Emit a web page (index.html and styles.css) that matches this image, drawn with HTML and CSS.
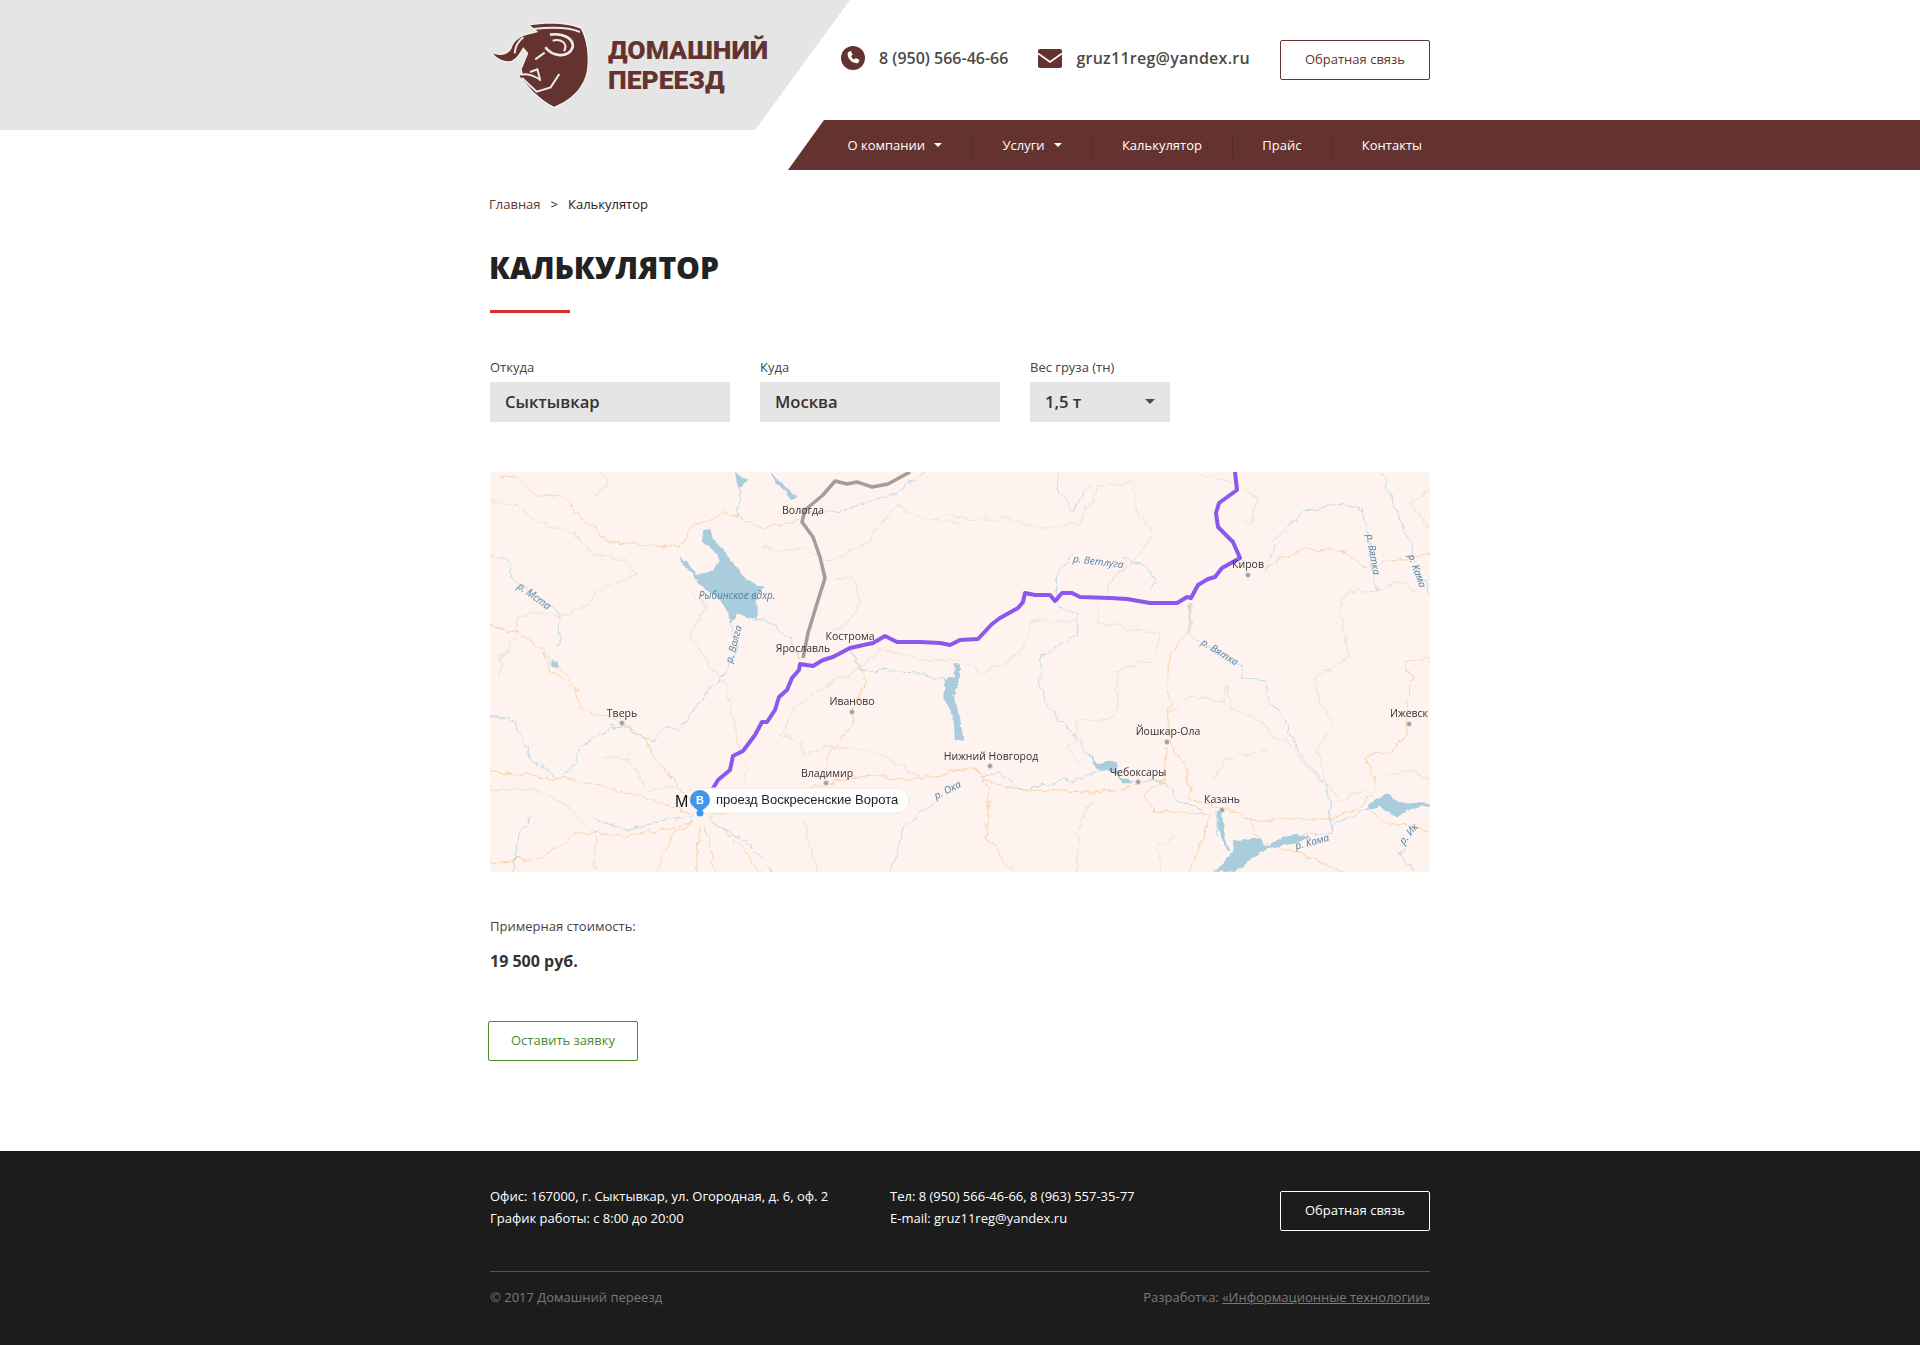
FILE: index.html
```html
<!DOCTYPE html>
<html lang="ru">
<head>
    <meta charset="UTF-8">
    <title>Калькулятор</title>
    <link rel="stylesheet" href="styles.css">
</head>
<body>
    <header class="header">
        <div class="header-top">
            <a class="logo" href="#">
                <svg class="logo-img" viewBox="0 0 360 330">
                    <path class="bull-halo" d="M150 46C205 36 275 42 302 56C318 85 326 125 322 170C318 220 285 265 222 292C200 280 180 262 160 245L118 198L128 190L125 178L145 130L130 112C120 125 115 142 95 152C80 158 55 150 38 130C60 140 85 135 95 115C100 95 120 80 140 75L175 66Z"/>
                    <path class="bull" d="M150 46C205 36 275 42 302 56C318 85 326 125 322 170C318 220 285 265 222 290C200 280 180 262 160 245L118 198L128 190L125 178L145 130L130 112C120 125 115 142 95 152C80 158 55 150 38 130C60 140 85 135 95 115C100 95 120 80 140 75L175 66Z"/>
                    <path class="bull-line" d="M160 57C215 51 270 53 300 66"/>
                    <path class="bull-line bull-curl" d="M196 112C215 138 264 148 278 112C282 86 250 68 210 74"/>
                    <path class="bull-line" d="M218 92C242 86 266 98 252 124"/>
                    <path class="bull-line" d="M130 82C112 96 105 112 104 130"/>
                    <path class="bull-line" d="M166 148L194 128"/>
                    <path class="bull-line" d="M122 194C145 190 170 200 182 212M126 204L170 245L212 232L238 192"/>
                    <path class="bull-line" d="M150 186L172 178L180 208"/>
                </svg>
                <span class="logo-name">ДОМАШНИЙ<br>ПЕРЕЕЗД</span>
            </a>
            <div class="contact contact-phone">
                <svg class="icon-phone" viewBox="0 0 24 24">
                    <circle class="icon-fill" cx="12" cy="12" r="12"/>
                    <path class="icon-white" d="M8.2 5.6l1.8-.5 1.7 3.7-1.6 1.2c.7 1.7 1.7 2.8 3.3 3.6l1.3-1.5 3.6 1.6-.5 2c-.3 1-1.2 1.6-2.2 1.5C10.500 16.700 7 13.100 6.600 8.300c0-1.200.5-2.300 1.600-2.700z"/>
                </svg>
                <span>8 (950) 566-46-66</span>
            </div>
            <div class="contact contact-mail">
                <svg class="icon-mail" viewBox="0 0 24 19">
                    <rect class="icon-fill" width="24" height="19" rx="2"/>
                    <path class="icon-stroke" d="M0 4.500L12 13L24 4.500"/>
                </svg>
                <span>gruz11reg@yandex.ru</span>
            </div>
            <a class="btn btn-brown" href="#">Обратная связь</a>
        </div>
        <nav class="menu">
            <a class="menu-item" href="#">О компании<i class="arrow"></i></a>
            <a class="menu-item" href="#">Услуги<i class="arrow"></i></a>
            <a class="menu-item" href="#">Калькулятор</a>
            <a class="menu-item" href="#">Прайс</a>
            <a class="menu-item menu-last" href="#">Контакты</a>
        </nav>
    </header>

    <main class="content">
        <div class="crumbs"><a href="#">Главная</a><span class="crumbs-sep">&gt;</span><span>Калькулятор</span></div>
        <h1 class="title">КАЛЬКУЛЯТОР</h1>
        <div class="title-line"></div>

        <div class="fields">
            <div class="field">
                <div class="field-label">Откуда</div>
                <div class="field-box">Сыктывкар</div>
            </div>
            <div class="field">
                <div class="field-label">Куда</div>
                <div class="field-box">Москва</div>
            </div>
            <div class="field field-small">
                <div class="field-label">Вес груза (тн)</div>
                <div class="field-box field-select">1,5 т<i class="arrow arrow-dark"></i></div>
            </div>
        </div>

        <svg class="map" viewBox="0 0 940 400">
            <defs>
                <filter id="wiggle" filterUnits="userSpaceOnUse" x="0" y="0" width="940" height="400">
                    <feTurbulence type="fractalNoise" baseFrequency="0.09" numOctaves="3" seed="4"/>
                    <feDisplacementMap in="SourceGraphic" scale="9" xChannelSelector="R" yChannelSelector="G"/>
                </filter>
                <filter id="wiggle-water" filterUnits="userSpaceOnUse" x="0" y="0" width="940" height="400">
                    <feTurbulence type="fractalNoise" baseFrequency="0.14" numOctaves="2" seed="9"/>
                    <feDisplacementMap in="SourceGraphic" scale="5" xChannelSelector="R" yChannelSelector="G"/>
                </filter>
            </defs>
            <rect class="map-bg" width="940" height="400"/>

            <g class="map-lines">
                <g transform="translate(-10,-2) scale(.3333)">
                    <path class="border" d="M30 95L110 105L160 155L280 190L350 260L440 270L470 320L350 360L320 410L240 440L160 420L110 450L100 520L60 570L60 615M360 10L385 40L350 75M640 370L680 410L625 490L690 590L740 650L750 700L770 810L800 900L790 960M900 790L970 690L1050 640L1130 600L1200 535L1330 570L1440 570M1060 330L1120 320L1140 400L1100 460L1060 480M840 225L900 250L950 230L1050 270L1160 220L1250 100L1330 150L1440 160M360 860L450 870L500 960L590 950M30 960L150 955L250 995L350 1100L340 1205M970 850L1050 830L1190 845L1250 880L1330 930M900 790L960 820L970 850M970 1040L1010 1205"/>
                    <path class="road" d="M30 463L115 490L195 545L280 640L305 715L425 758L495 805L520 860L590 940L640 1010M60 20L110 25L170 75L255 80L310 145L380 218L600 230L640 165L710 145L735 125L850 175L960 150M195 545L205 595L290 665M30 905L250 925L420 960L530 995L640 1030M30 1180L170 1165L300 1090L440 1100L640 1060M640 1060L580 1090L530 1205M660 1070L650 1205M675 1070L705 1205M690 1040L800 1150L835 1205M690 1040L1040 940L1180 915L1330 930L1440 900M1040 900L1050 850L1115 770L1115 725L1160 630L1110 540M960 570L950 545"/>
                    <path class="river" d="M30 250L75 265L100 330L240 430L235 530M30 740L90 745L140 840L150 870L240 925L290 880L300 830L390 770L430 770L515 815L560 770L590 790L660 690L700 650L750 600L770 540L750 465M770 10L780 70L775 145M800 440L870 460L930 500L950 550M1105 540L1140 600L1300 605L1400 630M345 1050L440 1080L560 1050L640 1040M100 1205L110 1100L155 1040M1230 1205L1280 1060L1360 1000M690 1050L800 1120L880 1205M960 120L1060 130L1240 70L1340 5"/>
                </g>
                <g transform="translate(460,-2) scale(.3333)">
                    <path class="border" d="M0 135L70 150L170 145L265 175L390 160L450 45L550 40L560 130L610 190L570 250L480 340L470 370M440 390L450 460L630 490L610 570L500 600L510 710L490 740L380 760L380 810L350 830L390 890M385 455L240 450L225 530L150 590L90 610L50 580M740 10L850 40L920 80L910 155L880 155M1440 175L1380 100L1440 60M1280 360L1190 370L1170 430L1200 560L1100 620L1110 700L1150 760L1100 850L1130 930L1140 990M650 730L720 680L820 690L830 650L840 710L910 740L950 770L970 810L1010 810L1060 880L1120 940M1280 360L1330 340L1340 330L1400 370M790 930L820 870L950 840M1245 960L1170 990L1140 950M640 1205L620 1130L680 1100M380 1205L390 1050L430 990M1300 920L1380 900L1440 930"/>
                    <path class="road" d="M0 900L80 895L100 930L210 960L400 965L420 970L520 960L580 935L650 930M720 400L715 480L660 550L650 640L660 700L650 750L670 830L710 900L720 990L850 1020L900 1050L1130 1050L1230 1015L1280 950L1245 860L1330 850L1370 790L1370 680L1385 620L1365 575L1440 565M650 830L640 930L580 970L610 1020L780 1030L760 1100L720 1205M940 290L1060 235L1190 245L1240 290L1440 250M1250 1020L1300 1050L1440 1085M900 1050L930 1115L1040 1145L1180 1205M105 1100L120 1020L110 940M105 1100L190 1205"/>
                    <path class="river" d="M320 10L330 70L370 120L420 45M365 260L320 320L320 400L380 430L385 495L280 550L265 640L300 720L370 790L440 880M520 260L600 300L620 335L595 365M720 400L720 490L870 590L880 620L945 630L950 680L1010 760L1040 840L1130 950L1145 1050L1145 1090L1040 1100M970 210L1060 125L1180 100L1240 120L1280 360M1300 10L1330 100L1390 240L1385 260L1440 370M940 310L980 220M90 925L140 900L210 960L300 940L400 925L490 880M600 930L650 940L680 990L760 1020M800 1020L810 1100M1140 1070L1250 1020M1380 1100L1350 1150L1390 1205"/>
                </g>
            </g>

            <g class="map-water">
                <path class="water" transform="translate(-10,-2) scale(.3333)" d="M670 180L690 178L700 210L730 240L770 290L800 330L848 350L830 390L830 450L800 440L770 430L750 465L745 430L720 390L680 360L655 340L640 310L615 295L595 258L620 275L650 315L670 310L700 300L720 270L700 240L665 215ZM870 5L950 80L935 90L890 40ZM765 10L805 30L775 60ZM1420 580L1425 620L1395 630L1390 680L1420 740L1425 810L1450 810L1440 740L1420 680L1440 625L1440 580ZM215 570L238 575L230 595L215 590Z"/>
                <path class="water" transform="translate(460,-2) scale(.3333)" d="M790 1205L850 1150L850 1110L930 1105L945 1130L1000 1100L1040 1095L1080 1100L1040 1120L950 1135L900 1170L860 1205ZM1255 1000L1310 970L1350 1000L1440 1000L1440 1005L1370 1020L1340 1045L1290 1010L1255 1020ZM420 855L440 880L490 870L500 880L510 920L560 940L520 940L490 905L440 900ZM800 1020L815 1020L825 1110L845 1150L825 1130L805 1080Z"/>
            </g>

            <polyline class="route route-alt" points="313,186 318,161 325,138 335,106 330,85 323,65 312,50 315,38 333,23 345,9 357,12 367,10 382,15 398,12 420,0"/>
            <polyline class="route" points="222,318 228,308 240,298 243,284 253,279 265,263 272,250 277,250 285,238 289,225 297,218 302,206 309,198 310,192 323,194 333,188 343,185 360,176 383,171 395,164 407,170 430,170 450,171 460,173 470,168 488,167 502,152 510,146 528,136 533,130 535,121 545,123 560,123 565,129 572,121 582,121 590,125 620,126 637,127 660,131 687,131 697,125 701,126 708,113 718,107 725,105 732,96 750,86 743,70 728,55 726,41 729,31 747,18 745,0"/>

            <circle class="city-dot" cx="132" cy="251" r="2.500"/>
            <circle class="city-dot" cx="362" cy="240" r="2.500"/>
            <circle class="city-dot" cx="336" cy="311" r="2.500"/>
            <circle class="city-dot" cx="500" cy="294" r="2.500"/>
            <circle class="city-dot" cx="758" cy="103" r="2.500"/>
            <circle class="city-dot" cx="919" cy="252" r="2.500"/>
            <circle class="city-dot" cx="677" cy="270" r="2.500"/>
            <circle class="city-dot" cx="648" cy="310" r="2.500"/>
            <circle class="city-dot" cx="732" cy="338" r="2.500"/>

            <text class="city" x="313" y="42">Вологда</text>
            <text class="city" x="360" y="168">Кострома</text>
            <text class="city" x="313" y="180">Ярославль</text>
            <text class="city" x="132" y="245">Тверь</text>
            <text class="city" x="362" y="233">Иваново</text>
            <text class="city" x="337" y="305">Владимир</text>
            <text class="city" x="501" y="288">Нижний Новгород</text>
            <text class="city" x="758" y="96">Киров</text>
            <text class="city" x="919" y="245">Ижевск</text>
            <text class="city" x="678" y="263">Йошкар-Ола</text>
            <text class="city" x="648" y="304">Чебоксары</text>
            <text class="city" x="732" y="331">Казань</text>

            <text class="water-name" x="247" y="127">Рыбинское вдхр.</text>
            <text class="water-name" transform="translate(247,173) rotate(-75)">р. Волга</text>
            <text class="water-name" transform="translate(42,127) rotate(36)">р. Мста</text>
            <text class="water-name" transform="translate(608,93) rotate(7)">р. Ветлуга</text>
            <text class="water-name" transform="translate(880,83) rotate(80)">р. Вятка</text>
            <text class="water-name" transform="translate(924,100) rotate(70)">р. Кама</text>
            <text class="water-name" transform="translate(728,183) rotate(32)">р. Вятка</text>
            <text class="water-name" transform="translate(823,373) rotate(-15)">р. Кама</text>
            <text class="water-name" transform="translate(921,364) rotate(-50)">р. Ик</text>
            <text class="water-name" transform="translate(459,321) rotate(-27)">р. Ока</text>

            <text class="city-big" x="185" y="335">М</text>
            <rect class="pin-label" x="200" y="316" width="219" height="25" rx="12"/>
            <path class="pin" d="M210 341c-1.500-3.500-10-6-10-13a10 10 0 0 1 20 0c0 7-8.500 9.500-10 13z"/>
            <circle class="pin-dot" cx="210" cy="341" r="3.500"/>
            <text class="pin-letter" x="210" y="332">B</text>
            <text class="pin-text" x="226" y="332">проезд Воскресенские Ворота</text>
        </svg>

        <div class="cost-label">Примерная стоимость:</div>
        <div class="cost">19 500 руб.</div>
        <a class="btn btn-green" href="#">Оставить заявку</a>
    </main>

    <footer class="footer">
        <div class="footer-in">
            <div class="footer-top">
                <div class="footer-col footer-office">
                    Офис: 167000, г. Сыктывкар, ул. Огородная, д. 6, оф. 2<br>
                    График работы: с 8:00 до 20:00
                </div>
                <div class="footer-col">
                    Тел: 8 (950) 566-46-66, 8 (963) 557-35-77<br>
                    E-mail: gruz11reg@yandex.ru
                </div>
                <a class="btn btn-white" href="#">Обратная связь</a>
            </div>
            <div class="footer-bottom">
                <span>© 2017 Домашний переезд</span>
                <span>Разработка: <a href="#">«Информационные технологии»</a></span>
            </div>
        </div>
    </footer>
</body>
</html>
```

FILE: styles.css
```css
*{
    box-sizing: border-box;
}
body{
    margin: 0;
    background-color: white;
    font-family: "Open Sans", sans-serif;
    font-size: 13px;
    color: #333;
}
a{
    color: inherit;
    text-decoration: none;
}

/* header */
.header{
    position: relative;
    height: 170px;
}
.header::before{
    content: "";
    position: absolute;
    left: 0;
    top: 0;
    width: 850px;
    height: 130px;
    background-color: #e5e5e5;
    clip-path: polygon(0 0, 100% 0, 755px 100%, 0 100%);
}
.header-top{
    position: relative;
    display: flex;
    align-items: center;
    width: 940px;
    height: 120px;
    margin: 0 auto;
}
.logo{
    display: flex;
    align-items: center;
    width: 361px;
    margin-left: -10px;
}
.logo-img{
    width: 120px;
    height: 110px;
    margin-top: 10px;
    margin-right: 8px;
}
.bull{
    fill: #65332f;
}
.bull-halo{
    fill: none;
    stroke: #f4f4f4;
    stroke-width: 7;
}
.bull-line{
    fill: none;
    stroke: #ececec;
    stroke-width: 6;
}
.bull-curl{
    stroke-width: 8;
}
.logo-name{
    font-family: Roboto, sans-serif;
    font-weight: 900;
    font-size: 26.500px;
    line-height: 30px;
    color: #65332f;
    margin-top: 10px;
}
.contact{
    display: flex;
    align-items: center;
    margin-top: -4px;
    font-size: 16px;
    font-weight: 600;
    color: #4a4a4a;
}
.contact-phone{
    margin-right: 30px;
}
.contact-mail{
    margin-right: 30px;
    letter-spacing: .25px;
}
.icon-phone{
    width: 24px;
    height: 24px;
    margin-right: 14px;
}
.icon-mail{
    width: 24px;
    height: 19px;
    margin-right: 14px;
}
.icon-fill{
    fill: #65332f;
}
.icon-white{
    fill: white;
}
.icon-stroke{
    fill: none;
    stroke: white;
    stroke-width: 1.8;
}
.btn{
    display: flex;
    align-items: center;
    justify-content: center;
    width: 150px;
    height: 40px;
    padding-bottom: 2px;
    border: 1px solid;
    border-radius: 2px;
    font-size: 13px;
}
.btn-brown{
    color: #65332f;
    border-color: #65332f;
    margin-left: auto;
}
.btn-green{
    color: #4d8a2a;
    border-color: #4d8a2a;
    margin-top: 48px;
    margin-left: -2px;
}
.btn-white{
    color: white;
    border-color: white;
    margin-left: auto;
    margin-top: 5px;
}

/* menu */
.menu{
    position: relative;
    display: flex;
    justify-content: flex-end;
    align-items: center;
    height: 50px;
    margin-left: 788px;
    padding-right: 490px;
    background-color: #65332f;
    clip-path: polygon(36px 0, 100% 0, 100% 100%, 0 100%);
}
.menu-item{
    display: flex;
    align-items: center;
    height: 24px;
    padding: 0 29.7px 1px;
    color: white;
    font-size: 13px;
    border-right: 1px solid #56282a;
}
.menu-last{
    padding-right: 8px;
    border-right: 0;
}
.arrow{
    display: inline-block;
    margin-left: 9px;
    border-left: 4px solid transparent;
    border-right: 4px solid transparent;
    border-top: 4px solid white;
}
.arrow-dark{
    margin-left: auto;
    border-left-width: 5px;
    border-right-width: 5px;
    border-top: 5px solid #4a4a4a;
}

/* content */
.content{
    width: 940px;
    margin: 0 auto;
    padding-top: 24px;
}
.crumbs{
    margin-left: -1px;
    line-height: 20px;
    color: #222;
}
.crumbs a{
    color: #65332f;
}
.crumbs-sep{
    margin: 0 10px;
}
.title{
    margin: 34px 0 0 -1px;
    font-size: 30px;
    line-height: 40px;
    font-weight: 800;
    color: #222;
}
.title-line{
    width: 80px;
    height: 3px;
    margin-top: 22px;
    background-color: #d32f2f;
}
.fields{
    display: flex;
    gap: 30px;
    margin-top: 45px;
}
.field{
    width: 240px;
}
.field-small{
    width: 140px;
}
.field-label{
    line-height: 18px;
    margin-bottom: 6px;
    color: #444;
}
.field-box{
    display: flex;
    align-items: center;
    height: 40px;
    padding: 0 15px 1px;
    background-color: #e5e5e5;
    font-size: 16.6px;
    font-weight: 600;
    color: #333;
}
.map{
    display: block;
    width: 940px;
    height: 400px;
    margin-top: 50px;
}
.map-bg{
    fill: #fef3ef;
}
.map-lines{
    filter: url(#wiggle);
}
.map-water{
    filter: url(#wiggle-water);
}
.border, .road, .river{
    fill: none;
    stroke-linejoin: round;
}
.border{
    stroke: #f0e6dd;
    stroke-width: 4;
}
.road{
    stroke: #f7cd9b;
    stroke-width: 2.500;
}
.river{
    stroke: #b5d5e2;
    stroke-width: 2.500;
}
.water{
    fill: #a9cddc;
}
.route{
    fill: none;
    stroke: #8c57ec;
    stroke-width: 4;
    stroke-linejoin: round;
}
.route-alt{
    stroke: #a39e9b;
    stroke-width: 3.500;
}
.city-dot{
    fill: #9c9c9c;
    stroke: #ddd;
    stroke-width: 1;
}
.city{
    font-size: 10.500px;
    fill: #333;
    text-anchor: middle;
}
.water-name{
    font-size: 10px;
    font-style: italic;
    fill: #4f7fa3;
    text-anchor: middle;
}
.city-big{
    font-family: "Liberation Sans", sans-serif;
    font-size: 16px;
    fill: #111;
}
.pin-label{
    fill: white;
    stroke: #efe6e2;
}
.pin, .pin-dot{
    fill: #4296ea;
}
.pin-letter{
    font-family: "Liberation Sans", sans-serif;
    font-size: 11px;
    font-weight: 700;
    fill: white;
    text-anchor: middle;
}
.pin-text{
    font-family: "Liberation Sans", sans-serif;
    font-size: 13px;
    fill: #222;
}
.cost-label{
    margin-top: 44px;
    line-height: 20px;
    color: #444;
}
.cost{
    margin-top: 13px;
    font-size: 16px;
    line-height: 24px;
    font-weight: 700;
    color: #333;
}

/* footer */
.footer{
    height: 194px;
    margin-top: 90px;
    padding-top: 35px;
    background-color: #1c1c1c;
    color: white;
}
.footer-in{
    width: 940px;
    margin: 0 auto;
}
.footer-top{
    display: flex;
    align-items: flex-start;
    padding-bottom: 40px;
    border-bottom: 1px solid #555;
}
.footer-col{
    margin-top: -1px;
    margin-bottom: 1px;
    line-height: 22px;
}
.footer-office{
    width: 400px;
}
.footer-bottom{
    display: flex;
    justify-content: space-between;
    margin-top: 15px;
    line-height: 20px;
    color: #7a7a7a;
}
.footer-bottom a{
    text-decoration: underline;
}
```
